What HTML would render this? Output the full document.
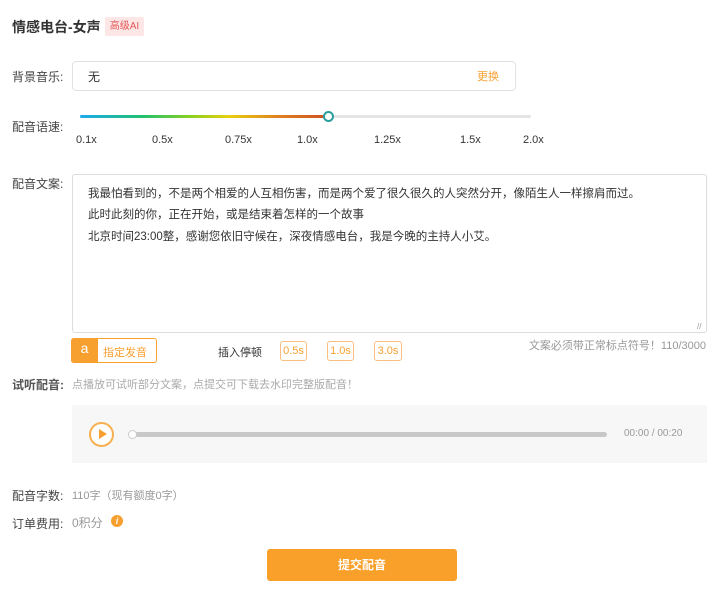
<!DOCTYPE html>
<html><head><meta charset="utf-8"><style>
*{margin:0;padding:0;box-sizing:border-box}
body{width:720px;height:606px;background:#fff;font-family:"Liberation Sans","Noto Sans CJK SC",sans-serif;color:#333;position:relative;overflow:hidden;font-size:12px}
.a{position:absolute;white-space:nowrap}
.lbl{font-size:12px;color:#444}
.gray{color:#999}
</style></head><body>
<div class="a" style="left:12px;top:17px;font-size:14px;color:#333;font-weight:bold">情感电台-女声</div>
<div class="a" style="left:105px;top:17px;width:39px;height:19px;background:#fde6e6;color:#e45858;font-size:10px;line-height:19px;text-align:center;border-radius:2px">高级AI</div>

<div class="a lbl" style="left:12px;top:68px">背景音乐:</div>
<div class="a" style="left:72px;top:61px;width:444px;height:30px;border:1px solid #e2e2e2;border-radius:4px"></div>
<div class="a" style="left:88px;top:68px;font-size:12px">无</div>
<div class="a" style="left:477px;top:68px;font-size:11px;color:#f7a030">更换</div>

<div class="a lbl" style="left:12px;top:118px">配音语速:</div>
<div class="a" style="left:80px;top:115px;width:451px;height:3px;background:#e4e4e4;border-radius:2px"></div>
<div class="a" style="left:80px;top:115px;width:248px;height:3px;border-radius:2px;background:linear-gradient(90deg,#1eaaf0,#20c070 25%,#8cd020 45%,#e8d010 60%,#e08020 80%,#d05020)"></div>
<div class="a" style="left:323px;top:111px;width:11px;height:11px;border:2px solid #2a9d9d;border-radius:50%;background:#fff"></div>
<div class="a" style="left:76px;top:134px;font-size:11px">0.1x</div>
<div class="a" style="left:152px;top:134px;font-size:11px">0.5x</div>
<div class="a" style="left:225px;top:134px;font-size:11px">0.75x</div>
<div class="a" style="left:297px;top:134px;font-size:11px">1.0x</div>
<div class="a" style="left:374px;top:134px;font-size:11px">1.25x</div>
<div class="a" style="left:460px;top:134px;font-size:11px">1.5x</div>
<div class="a" style="left:523px;top:134px;font-size:11px">2.0x</div>

<div class="a lbl" style="left:12px;top:175px">配音文案:</div>
<div class="a" style="left:72px;top:174px;width:635px;height:159px;border:1px solid #ddd;border-radius:3px"></div>
<div class="a" style="left:88px;top:184px;font-size:11.5px;line-height:21.3px;color:#333">我最怕看到的，不是两个相爱的人互相伤害，而是两个爱了很久很久的人突然分开，像陌生人一样擦肩而过。<br>此时此刻的你，正在开始，或是结束着怎样的一个故事<br>北京时间23:00整，感谢您依旧守候在，深夜情感电台，我是今晚的主持人小艾。</div>
<div class="a" style="left:697px;top:322px;font-size:8px;color:#999">//</div>

<div class="a" style="left:71px;top:338px;width:86px;height:25px;border:1px solid #f7a030;border-radius:3px"></div>
<div class="a" style="left:71px;top:338px;width:27px;height:25px;background:#f7a030;border-radius:3px 0 0 3px;color:#fff;text-align:center;font-size:14px;line-height:21px">a</div>
<div class="a" style="left:103px;top:344px;font-size:11px;color:#f7a030">指定发音</div>
<div class="a" style="left:218px;top:344px;font-size:11px;color:#333">插入停顿</div>
<div class="a" style="left:280px;top:341px;width:27px;height:20px;border:1px solid #f7c080;border-radius:3px;color:#f7a030;font-size:11px;line-height:18px;text-align:center">0.5s</div>
<div class="a" style="left:327px;top:341px;width:27px;height:20px;border:1px solid #f7c080;border-radius:3px;color:#f7a030;font-size:11px;line-height:18px;text-align:center">1.0s</div>
<div class="a" style="left:374px;top:341px;width:28px;height:20px;border:1px solid #f7c080;border-radius:3px;color:#f7a030;font-size:11px;line-height:18px;text-align:center">3.0s</div>
<div class="a gray" style="right:14px;top:337px;font-size:11px">文案必须带正常标点符号！110/3000</div>

<div class="a lbl" style="left:12px;top:376px;font-weight:bold;color:#555">试听配音:</div>
<div class="a gray" style="left:72px;top:376px;font-size:11px;color:#aaa">点播放可试听部分文案，点提交可下载去水印完整版配音！</div>
<div class="a" style="left:72px;top:405px;width:635px;height:58px;background:#f7f7f7"></div>
<div class="a" style="left:89px;top:422px;width:25px;height:25px;border:2px solid #f7b050;border-radius:50%;background:#fff"></div>
<div class="a" style="left:99px;top:429px;width:0;height:0;border-left:8px solid #f7a030;border-top:5px solid transparent;border-bottom:5px solid transparent"></div>
<div class="a" style="left:132px;top:432px;width:475px;height:5px;background:#c8c8c8;border-radius:3px"></div>
<div class="a" style="left:128px;top:430px;width:9px;height:9px;border:1px solid #ccc;border-radius:50%;background:#fff"></div>
<div class="a gray" style="left:624px;top:428px;font-size:10px">00:00 / 00:20</div>

<div class="a lbl" style="left:12px;top:487px">配音字数:</div>
<div class="a gray" style="left:72px;top:487px;font-size:11px">110字（现有额度0字）</div>
<div class="a lbl" style="left:12px;top:515px">订单费用:</div>
<div class="a gray" style="left:72px;top:514px;font-size:12px;color:#999">0积分</div>
<div class="a" style="left:111px;top:515px;width:12px;height:12px;border-radius:50%;background:#f7a030;color:#fff;font-size:9px;line-height:12px;text-align:center;font-style:italic;font-weight:bold">i</div>

<div class="a" style="left:267px;top:549px;width:190px;height:32px;background:#f9a02a;border-radius:3px;color:#fff;font-size:12px;font-weight:bold;line-height:32px;text-align:center">提交配音</div>
</body></html>
